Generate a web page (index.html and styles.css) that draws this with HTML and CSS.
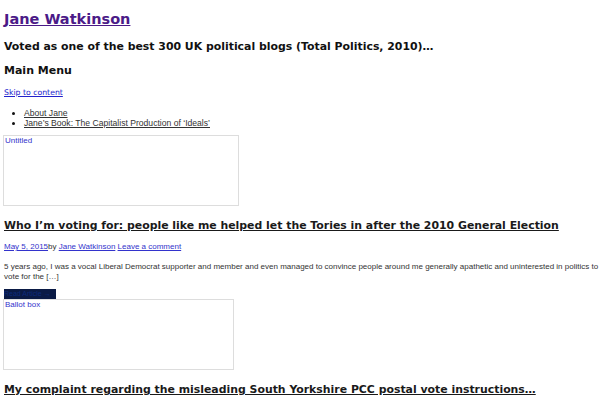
FILE: index.html
```html
<!DOCTYPE html>
<html>
<head>
<meta charset="utf-8">
<link rel="stylesheet" href="styles.css">
</head>
<body>
<header class="site-header">
  <h1 class="site-title"><a href="#">Jane Watkinson</a></h1>
  <h2 class="site-desc">Voted as one of the best 300 UK political blogs (Total Politics, 2010)…</h2>
  <h3 class="menu-title">Main Menu</h3>
  <a class="skip" href="#">Skip to content</a>
  <ul class="menu">
    <li><a href="#">About Jane</a></li>
    <li><a href="#">Jane’s Book: The Capitalist Production of ‘Ideals’</a></li>
  </ul>
</header>
<main>
  <div class="thumb"><a href="#">Untitled</a></div>
  <article class="post">
    <h2 class="post-title"><a href="#">Who I’m voting for: people like me helped let the Tories in after the 2010 General Election</a></h2>
    <div class="meta"><a href="#">May 5, 2015</a>by <a href="#">Jane Watkinson</a> <a href="#">Leave a comment</a></div>
    <p class="excerpt">5 years ago, I was a vocal Liberal Democrat supporter and member and even managed to convince people around me generally apathetic and uninterested in politics to vote for the […]</p>
    <a class="read" href="#">Read Article →</a>
    <div class="thumb thumb2"><a href="#">Ballot box</a></div>
  </article>
  <article class="post">
    <h2 class="post-title"><a href="#">My complaint regarding the misleading South Yorkshire PCC postal vote instructions…</a></h2>
  </article>
</main>
</body>
</html>
```
FILE: styles.css
```css
body {
  margin: 0;
  padding: 0 0 0 4px;
  font-family: "DejaVu Sans", sans-serif;
  background: #fff;
  color: #111;
}
.site-title {
  font-size: 14.5px;
  margin: 9px 0 0;
  line-height: 20px;
}
.site-title a { color: #4b1a87; }
.site-desc {
  font-size: 10.9px;
  margin: 11px 0 0;
  line-height: 14px;
}
.menu-title {
  font-size: 11px;
  margin: 10px 0 0;
  line-height: 14px;
}
.skip {
  display: block;
  margin-top: 10px;
  font-size: 7.75px;
  line-height: 10px;
  color: #2222cc;
}
.menu {
  margin: 10px 0 0;
  padding-left: 20px;
  font-family: "Liberation Sans", Arial, sans-serif;
  font-size: 8.6px;
  line-height: 10px;
}
.menu a { color: #333; }
.thumb {
  width: 234px;
  height: 69px;
  border: 1px solid #ddd;
  margin: 7px 0 0 -1px;
  font-family: "Liberation Sans", Arial, sans-serif;
  font-size: 8px;
  line-height: 10px;
}
.thumb a { color: #3333cc; text-decoration: none; margin-left: 1px; }
.post-title {
  font-size: 10.9px;
  margin: 13px 0 0;
  line-height: 14px;
}
.post-title a { color: #1a1a1a; }
.meta {
  margin-top: 9px;
  font-family: "Liberation Sans", Arial, sans-serif;
  font-size: 8px;
  line-height: 10px;
  color: #333;
}
.meta a { color: #3333cc; }
.excerpt {
  margin: 10px 0 0;
  font-family: "Liberation Sans", Arial, sans-serif;
  font-size: 8px;
  line-height: 10px;
  color: #333;
}
.read {
  display: block;
  margin-top: 7px;
  background: #0a1a45;
  color: #0d2a7a;
  font-family: "Liberation Sans", Arial, sans-serif;
  font-size: 7px;
  line-height: 10px;
  width: 52px;
  text-decoration: none;
  overflow: hidden;
  white-space: nowrap;
}
.thumb2 {
  width: 229px;
  margin-top: 0;
}
```
